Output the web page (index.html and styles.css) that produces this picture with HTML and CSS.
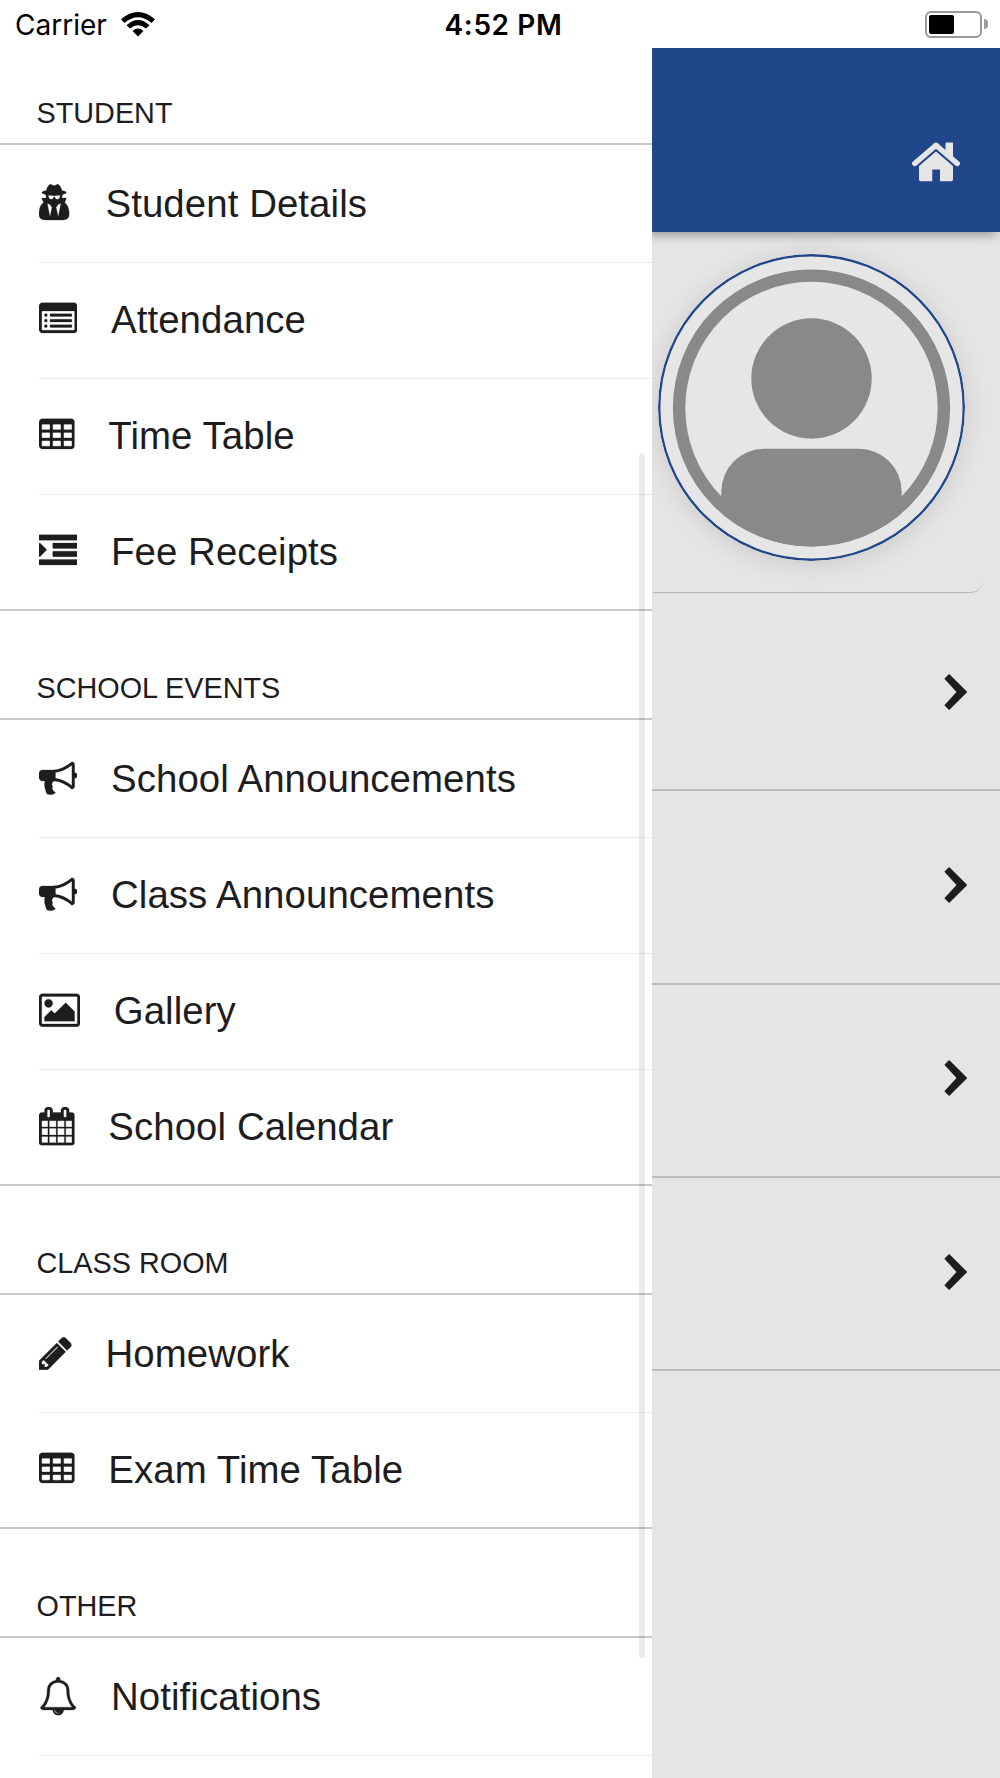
FILE: index.html
```html
<!DOCTYPE html>
<html lang="en">
<head>
	<meta charset="UTF-8">
	<title>School Menu</title>
	<link rel="stylesheet" href="styles.css">
</head>
<body>
	<svg class="defs">
		<symbol id="secret" viewBox="192 0 1536 1792"><path d="M704 1536l96-448-96-128-128-64zm384 0l128-640-128 64-96 128zm104-993q-2-4-4-6-10-8-96-8-70 0-167 19-7 2-21 2t-21-2q-97-19-167-19-86 0-96 8-2 2-4 6 2 18 4 27 2 3 7.500 6.500t7.500 10.500q2 4 7.500 20.500t7 20.500 7.500 17 8.500 17 9 14 12 13.500 14 9.500 17.500 8 20.500 4 24.500 2q36 0 59-12.500t32.500-30 14.500-34.500 11.500-29.500 17.500-12.500h12q11 0 17.500 12.500t11.500 29.500 14.500 34.500 32.500 30 59 12.500q13 0 24.500-2t20.500-4 17.500-8 14-9.500 12-13.500 9-14 8.500-17 7.500-17 7-20.500 7.500-20.500q2-7 7.500-10.500t7.500-6.500q2-9 4-27zm408 879q0 121-73 190t-194 69h-874q-121 0-194-69t-73-190q0-61 4.500-118t19-125.500 37.500-123.500 63.500-103.500 93.500-74.500l-90-220h214q-22-64-22-128 0-12 2-32-194-40-194-96 0-57 210-99 17-62 51.500-134t70.500-114q32-37 76-37 30 0 84 31t84 31 84-31 84-31q44 0 76 37 36 42 70.500 114t51.500 134q210 42 210 99 0 56-194 96 7 81-20 160h214l-82 225q63 33 107.500 96.500t65.500 143.500 29 151.500 8 148.500z"/></symbol>
		<symbol id="list" viewBox="0 0 1792 1792"><path fill-rule="evenodd" d="M160 128h1472q66 0 113 47t47 113v1088q0 66-47 113t-113 47h-1472q-66 0-113-47t-47-113v-1088q0-66 47-113t113-47zM160 512q-32 0-32 32v832q0 32 32 32h1472q32 0 32-32v-832q0-32-32-32z"/><path d="M288 640h64q32 0 32 32v64q0 32-32 32h-64q-32 0-32-32v-64q0-32 32-32zm0 256h64q32 0 32 32v64q0 32-32 32h-64q-32 0-32-32v-64q0-32 32-32zm0 256h64q32 0 32 32v64q0 32-32 32h-64q-32 0-32-32v-64q0-32 32-32zM544 640h960q32 0 32 32v64q0 32-32 32h-960q-32 0-32-32v-64q0-32 32-32zm0 256h960q32 0 32 32v64q0 32-32 32h-960q-32 0-32-32v-64q0-32 32-32zm0 256h960q32 0 32 32v64q0 32-32 32h-960q-32 0-32-32v-64q0-32 32-32z"/></symbol>
		<symbol id="table" viewBox="64 0 1664 1792"><path d="M576 1376v-192q0-32-32-32h-320q-32 0-32 32v192q0 32 32 32h320q32 0 32-32zm0-384v-192q0-32-32-32h-320q-32 0-32 32v192q0 32 32 32h320q32 0 32-32zm512 384v-192q0-32-32-32h-320q-32 0-32 32v192q0 32 32 32h320q32 0 32-32zm-512-768v-192q0-32-32-32h-320q-32 0-32 32v192q0 32 32 32h320q32 0 32-32zm512 384v-192q0-32-32-32h-320q-32 0-32 32v192q0 32 32 32h320q32 0 32-32zm512 384v-192q0-32-32-32h-320q-32 0-32 32v192q0 32 32 32h320q32 0 32-32zm-512-768v-192q0-32-32-32h-320q-32 0-32 32v192q0 32 32 32h320q32 0 32-32zm512 384v-192q0-32-32-32h-320q-32 0-32 32v192q0 32 32 32h320q32 0 32-32zm0-384v-192q0-32-32-32h-320q-32 0-32 32v192q0 32 32 32h320q32 0 32-32zm128-320v1088q0 66-47 113t-113 47h-1344q-66 0-113-47t-47-113v-1088q0-66 47-113t113-47h1344q66 0 113 47t47 113z"/></symbol>
		<symbol id="indent" viewBox="0 0 1792 1792"><path d="M352 832q0 14-9 23l-288 288q-9 9-23 9-32 0-32-32v-576q0-32 32-32 14 0 23 9l288 288q9 9 9 23zM32 1280h1728q32 0 32 32v192q0 32-32 32h-1728q-32 0-32-32v-192q0-32 32-32zM672 896h1088q32 0 32 32v192q0 32-32 32h-1088q-32 0-32-32v-192q0-32 32-32zM672 512h1088q32 0 32 32v192q0 32-32 32h-1088q-32 0-32-32v-192q0-32 32-32zM32 128h1728q32 0 32 32v192q0 32-32 32h-1728q-32 0-32-32v-192q0-32 32-32z"/></symbol>
		<symbol id="horn" viewBox="0 0 1792 1792"><path d="M1664 640q53 0 90.500 37.500t37.500 90.500-37.500 90.500-90.500 37.500v384q0 52-38 90t-90 38q-417-347-812-380-58 19-91 66t-31 100.500 40 92.500q-20 33-23 65.500t6 58 33.500 55 48 50 61.500 50.500q-29 58-111.500 83t-168.500 11.500-132-55.500q-7-23-29.500-87.500t-32-94.500-23-89-15-101 3.500-98.500 22-110.500h-122q-66 0-113-47t-47-113v-192q0-66 47-113t113-47h480q435 0 896-384 52 0 90 38t38 90v384zm-128 604v-954q-394 302-768 343v270q377 42 768 341z"/></symbol>
		<symbol id="picture" viewBox="-64 0 1920 1792"><path d="M576 576q0 80-56 136t-136 56-136-56-56-136 56-136 136-56 136 56 56 136zm1024 384v448h-1408v-192l320-320 160 160 512-512zm96-704h-1600q-13 0-22.500 9.500t-9.500 22.500v1216q0 13 9.500 22.500t22.500 9.500h1600q13 0 22.500-9.500t9.500-22.500v-1216q0-13-9.500-22.500t-22.500-9.500zm160 32v1216q0 66-47 113t-113 47h-1600q-66 0-113-47t-47-113v-1216q0-66 47-113t113-47h1600q66 0 113 47t47 113z"/></symbol>
		<symbol id="calendar" viewBox="64 0 1664 1792"><path d="M192 1664h288v-288h-288v288zm352 0h320v-288h-320v288zm-352-352h288v-320h-288v320zm352 0h320v-320h-320v320zm-352-384h288v-288h-288v288zm736 736h320v-288h-320v288zm-384-736h320v-288h-320v288zm768 736h288v-288h-288v288zm-384-352h320v-320h-320v320zm-352-864v-288q0-13-9.500-22.500t-22.500-9.500h-64q-13 0-22.500 9.500t-9.500 22.500v288q0 13 9.500 22.500t22.500 9.500h64q13 0 22.500-9.500t9.500-22.500zm736 864h288v-320h-288v320zm-384-384h320v-288h-320v288zm384 0h288v-288h-288v288zm32-480v-288q0-13-9.500-22.500t-22.500-9.500h-64q-13 0-22.500 9.500t-9.500 22.500v288q0 13 9.500 22.500t22.500 9.500h64q13 0 22.500-9.500t9.500-22.500zm384-64v1280q0 52-38 90t-90 38h-1408q-52 0-90-38t-38-90v-1280q0-52 38-90t90-38h128v-96q0-66 47-113t113-47h64q66 0 113 47t47 113v96h384v-96q0-66 47-113t113-47h64q66 0 113 47t47 113v96h128q52 0 90 38t38 90z"/></symbol>
		<symbol id="pencil" viewBox="128 0 1536 1792"><path d="M491 1536l91-91-235-235-91 91v107h128v128h107zm523-928q0-22-22-22-10 0-17 7l-542 542q-7 7-7 17 0 22 22 22 10 0 17-7l542-542q7-7 7-17zm-54-192l416 416-832 832h-416v-416zm683 96q0 53-37 90l-166 166-416-416 166-165q36-38 90-38 53 0 91 38l235 234q37 39 37 91z"/></symbol>
		<symbol id="bell" viewBox="0 0 1792 1792"><path d="M912 1696q0-16-16-16-59 0-101.500-42.500t-42.500-101.500q0-16-16-16t-16 16q0 73 51.500 124.500t124.500 51.500q16 0 16-16zm-666-288h1300q-266-300-266-832 0-51-24-105t-69-103-121.500-80.500-169.500-31.500-169.500 31.500-121.500 80.500-69 103-24 105q0 532-266 832zm1482 0q0 52-38 90t-90 38h-448q0 106-75 181t-181 75-181-75-75-181h-448q-52 0-90-38t-38-90q50-42 91-88t85-119.500 74.500-158.500 50-206 19.500-260q0-152 117-282.500t307-158.500q-8-19-8-39 0-40 28-68t68-28 68 28 28 68q0 20-8 39 190 28 307 158.500t117 282.500q0 139 19.500 260t50 206 74.500 158.500 85 119.500 91 88z"/></symbol>
		<symbol id="chevron" viewBox="0 0 24 36"><path d="M.8 5.200Q.3 4.700 .8 4.200L4.600 .6Q5.200 .1 5.700 .6L22.800 17.400Q23.400 18 22.800 18.600L5.700 35.400Q5.200 35.900 4.600 35.400L.8 31.800Q.3 31.300 .8 30.800L12.500 18z"/></symbol>
	</svg>

	<div class="status">
		<div class="carrier">
			<span>Carrier</span>
			<svg class="wifi" viewBox="0 0 34 25">
				<path d="M0 7.300Q17-7.300 34 7.300L30.600 10.900Q17-.5 3.400 10.900z"/>
				<path d="M5.500 13.200Q17 2.800 28.500 13.200L25 16.600Q17 9.800 9 16.600z"/>
				<path d="M11.500 19Q17 14.200 22.500 19L17 24.500z"/>
			</svg>
		</div>
		<div class="time">4:52 PM</div>
		<div class="power">
			<div class="battery"><div class="level"></div></div>
			<div class="nub"></div>
		</div>
	</div>

	<div class="main">
		<div class="menu">
			<h2>STUDENT</h2>
			<ul>
				<li><svg class="icon w12"><use href="#secret"/></svg><span>Student Details</span></li>
				<li><svg class="icon w14"><use href="#list"/></svg><span>Attendance</span></li>
				<li><svg class="icon w13"><use href="#table"/></svg><span>Time Table</span></li>
				<li><svg class="icon w14"><use href="#indent"/></svg><span>Fee Receipts</span></li>
			</ul>
			<h2>SCHOOL EVENTS</h2>
			<ul>
				<li><svg class="icon w14"><use href="#horn"/></svg><span>School Announcements</span></li>
				<li><svg class="icon w14"><use href="#horn"/></svg><span>Class Announcements</span></li>
				<li><svg class="icon w15"><use href="#picture"/></svg><span>Gallery</span></li>
				<li><svg class="icon w13"><use href="#calendar"/></svg><span>School Calendar</span></li>
			</ul>
			<h2>CLASS ROOM</h2>
			<ul>
				<li><svg class="icon w12"><use href="#pencil"/></svg><span>Homework</span></li>
				<li><svg class="icon w13"><use href="#table"/></svg><span>Exam Time Table</span></li>
			</ul>
			<h2>OTHER</h2>
			<ul class="open">
				<li><svg class="icon w14"><use href="#bell"/></svg><span>Notifications</span></li>
			</ul>
			<div class="scroll"></div>
		</div>

		<div class="page">
			<div class="header">
				<svg class="home" viewBox="0 0 48 40">
					<path d="M2.800 21.500L24 3.200 45.200 21.500" fill="none" stroke="#e6e6e6" stroke-width="5.400" stroke-linecap="round" stroke-linejoin="round"/>
					<path d="M34 .5h6.500q.5 0 .5 .5v16l-7.500-6.500V1q0-.5 .5-.5z"/>
					<path d="M24 9.500L41 24V37.500q0 1.800-1.800 1.800H28V27.500H20.300V39.300H8.800Q7 39.300 7 37.500V24z"/>
				</svg>
			</div>
			<div class="card">
				<svg class="avatar" viewBox="0 0 307 307">
					<clipPath id="round"><circle cx="153.500" cy="154" r="138.500"/></clipPath>
					<circle class="edge" cx="153.500" cy="153.500" r="152.300"/>
					<circle class="ring" cx="153.500" cy="154" r="132.400"/>
					<circle cx="153.500" cy="124.500" r="60.200"/>
					<rect x="63.300" y="194.700" width="180.400" height="140" rx="43" clip-path="url(#round)"/>
				</svg>
			</div>
			<div class="row"><svg class="next"><use href="#chevron"/></svg></div>
			<div class="row"><svg class="next"><use href="#chevron"/></svg></div>
			<div class="row"><svg class="next"><use href="#chevron"/></svg></div>
			<div class="row"><svg class="next"><use href="#chevron"/></svg></div>
		</div>
	</div>
</body>
</html>
```
FILE: styles.css
```css
* {
	margin: 0;
	padding: 0;
	list-style: none;
	box-sizing: border-box;
}
body {
	width: 1000px;
	height: 1778px;
	overflow: hidden;
	background-color: #fff;
	color: #1d1d1f;
	font-family: "Liberation Sans", Arial, sans-serif;
}
svg {
	display: block;
	fill: currentColor;
}
.defs {
	display: none;
}

/* status bar */
.status {
	height: 48px;
	padding: 0 12px 0 15px;
	display: grid;
	grid-template-columns: 1fr auto 1fr;
	align-items: center;
	color: #000;
	font-family: Inter, sans-serif;
	font-size: 28px;
}
.carrier {
	display: flex;
	align-items: center;
	gap: 14px;
}
.carrier span {
	padding-top: 2px;
}
.wifi {
	width: 34px;
	height: 25px;
}
.time {
	padding: 2px 0 0 4px;
	font-weight: 600;
	letter-spacing: .6px;
}
.power {
	display: flex;
	justify-content: flex-end;
	align-items: center;
	gap: 2px;
}
.battery {
	width: 57px;
	height: 27px;
	padding: 2px;
	border: 2px solid #999;
	border-radius: 6px;
}
.level {
	width: 25px;
	height: 19px;
	border-radius: 2px;
	background-color: #000;
}
.nub {
	width: 4px;
	height: 10px;
	background-color: #999;
	border-radius: 0 4px 4px 0;
}

.main {
	display: flex;
	height: 1730px;
	overflow: hidden;
}

/* side menu */
.menu {
	position: relative;
	width: 652px;
}
.menu h2 {
	height: 109px;
	padding: 59px 0 0 36.5px;
	border-bottom: 2px solid #c8c8c8;
	font-size: 28.8px;
	font-weight: normal;
	line-height: 36px;
}
.menu h2:first-child {
	height: 97px;
	padding-top: 47px;
}
.menu ul {
	border-bottom: 2px solid #c8c8c8;
}
.menu li {
	height: 116px;
	margin-left: 39px;
	padding-bottom: 1px;
	border-bottom: 1px solid #ebebeb;
	display: flex;
	align-items: center;
	gap: 33.6px;
	font-size: 38.4px;
	letter-spacing: .08px;
}
.menu li:first-child {
	height: 118px;
	padding-top: 2px;
}
.menu li:last-child {
	height: 114px;
	border-bottom: none;
	padding-bottom: 0;
}
.menu .open {
	border-bottom: none;
}
.menu .open li {
	height: 118px;
	padding-bottom: 1px;
	border-bottom: 1px solid #ebebeb;
}
.icon {
	height: 38.4px;
	margin-bottom: 1px;
	stroke: currentColor;
	stroke-width: 12px;
}
.w12 {
	width: 32.9px;
}
.w13 {
	width: 35.7px;
}
.w14 {
	width: 38.4px;
}
.w15 {
	width: 41.1px;
}
.scroll {
	position: absolute;
	top: 405px;
	right: 7px;
	width: 6px;
	height: 1205px;
	border-radius: 3px;
	background-color: rgba(0, 0, 0, .08);
}

/* page behind the menu */
.page {
	width: 348px;
	background-color: #e5e5e5;
	overflow: hidden;
}
.header {
	height: 184px;
	padding: 94px 40px 0 0;
	display: flex;
	justify-content: flex-end;
	background-color: #20478a;
	box-shadow: -4px 3px 10px rgba(0, 0, 0, .35);
	color: #e6e6e6;
}
.home {
	width: 48px;
	height: 40px;
}
.card {
	height: 359px;
	margin: 1px 16px 6px 0;
	padding: 21px 19px 0 0;
	display: flex;
	justify-content: flex-end;
	align-items: flex-start;
	border-radius: 0 14px 14px 0;
	box-shadow: 0 2px 1px -1px rgba(0, 0, 0, .16), 0 1px 0 rgba(0, 0, 0, .06);
}
.avatar {
	width: 307px;
	height: 307px;
	border-radius: 50%;
	background-color: #e6e6e6;
	box-shadow: 0 3px 26px rgba(0, 0, 0, .12);
	color: #898989;
}
.edge {
	fill: none;
	stroke: #20478a;
	stroke-width: 2.4px;
}
.ring {
	fill: none;
	stroke: #898989;
	stroke-width: 12.4px;
}
.row {
	height: 193.3px;
	padding: 0 32px 4px 0;
	border-bottom: 2px solid #bcbcbc;
	display: flex;
	justify-content: flex-end;
	align-items: center;
}
.next {
	width: 24px;
	height: 36px;
}
```
